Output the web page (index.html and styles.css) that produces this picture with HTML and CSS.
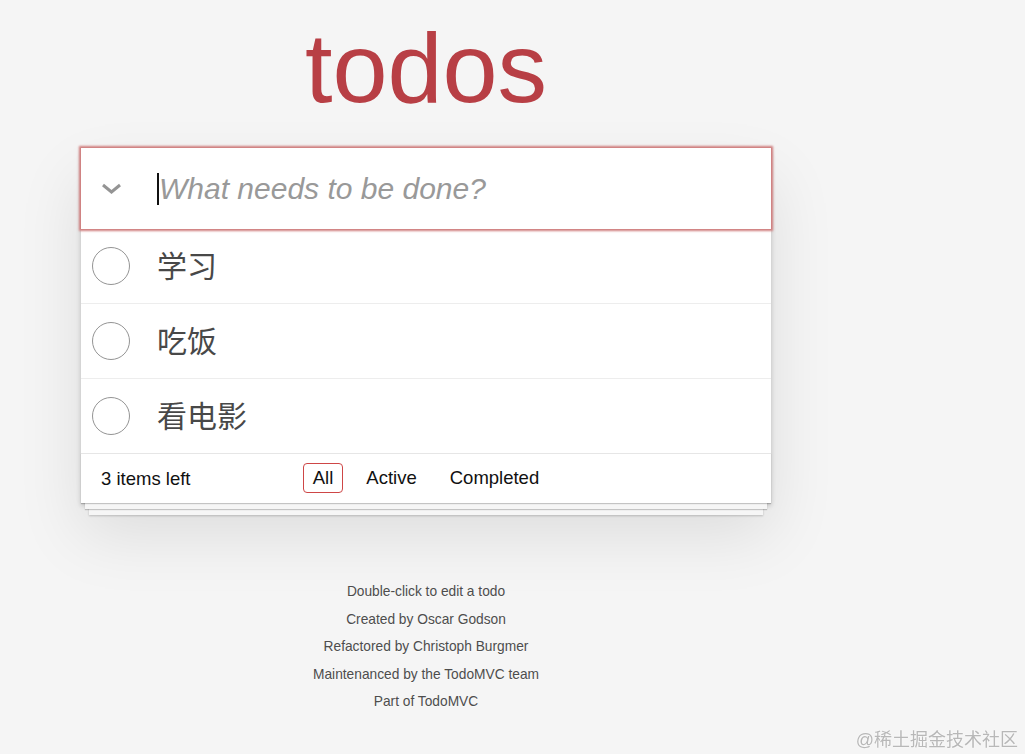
FILE: index.html
```html
<!DOCTYPE html>
<html lang="zh-CN">
<head>
  <meta charset="UTF-8">
  <meta name="viewport" content="width=device-width, initial-scale=1.0">
  <title>todos</title>
  <link rel="stylesheet" href="styles.css">
</head>
<body>
  <div class="page">
    <h1 class="title">todos</h1>

    <!-- APP -->
    <section class="todoapp">
      <header class="new-row">
        <svg class="toggle-all" width="21" height="11" viewBox="0 0 21 11">
          <polyline points="2,2 10.5,9 19,2" fill="none" stroke="#949494" stroke-width="3"/>
        </svg>
        <span class="caret"></span>
        <input class="new-todo" type="text" placeholder="What needs to be done?">
      </header>

      <ul class="todo-list">
        <li class="todo"><span class="toggle"></span><label>学习</label></li>
        <li class="todo"><span class="toggle"></span><label>吃饭</label></li>
        <li class="todo"><span class="toggle"></span><label>看电影</label></li>
      </ul>

      <footer class="footer">
        <span class="todo-count">3 items left</span>
        <ul class="filters">
          <li><a href="#/" class="selected">All</a></li>
          <li><a href="#/active">Active</a></li>
          <li><a href="#/completed">Completed</a></li>
        </ul>
        <span></span>
      </footer>
    </section>

    <!-- INFO -->
    <footer class="info">
      <p>Double-click to edit a todo</p>
      <p>Created by Oscar Godson</p>
      <p>Refactored by Christoph Burgmer</p>
      <p>Maintenanced by the TodoMVC team</p>
      <p>Part of TodoMVC</p>
    </footer>
  </div>

  <div class="watermark">@稀土掘金技术社区</div>
</body>
</html>
```

FILE: styles.css
```css
/* === TRANG === */
body {
  margin: 0;
  background: #f5f5f5;
  font-family: "Liberation Sans", Arial, "Noto Sans CJK SC", sans-serif;
  color: #111;
}

.page {
  width: 690px;
  margin-left: 81px;
}

.title {
  margin: 18px 0 30px;
  font-size: 99px;
  line-height: 100px;
  font-weight: 400;
  color: #b83f45;
  text-align: center;
}

/* === APP === */
.todoapp {
  background: #fff;
  box-shadow: 0 2.5px 5px 0 rgba(0,0,0,0.2), 0 31px 62px 0 rgba(0,0,0,0.1);
}

.new-row {
  position: relative;
  z-index: 1;
  display: flex;
  align-items: center;
  height: 81px;
  padding-left: 20px;
  background: #fff;
  box-shadow: 0 0 2px 2px #cf7d7d;
}

.toggle-all {
  display: block;
}

.caret {
  width: 2px;
  height: 32px;
  margin-left: 35px;
  background: #111;
}

.new-todo {
  flex: 1;
  padding: 0;
  border: 0;
  outline: 0;
  background: transparent;
  font-family: "Liberation Sans", Arial, sans-serif;
  font-size: 30px;
  color: #4d4d4d;
}

.new-todo::placeholder {
  font-style: italic;
  color: #999;
}

/* === DANH SÁCH === */
.todo-list {
  list-style: none;
  margin: 0;
  padding: 0;
}

.todo {
  display: flex;
  align-items: center;
  height: 74px;
  border-bottom: 1px solid #ededed;
}

.todo:last-child {
  border-bottom: none;
}

.toggle {
  width: 36px;
  height: 36px;
  margin-left: 11px;
  border: 1px solid #949494;
  border-radius: 50%;
}

.todo label {
  margin-left: 27px;
  padding-top: 2px;
  font-size: 30px;
  line-height: 36px;
  color: #484848;
}

/* === FOOTER === */
.footer {
  display: grid;
  grid-template-columns: 1fr auto 1fr;
  align-items: center;
  height: 49px;
  padding: 0 20px;
  border-top: 1px solid #e6e6e6;
  font-size: 18.5px;
  color: #111;
  box-shadow: 0 1px 1px rgba(0,0,0,0.2),
              0 10px 0 -4px #f6f6f6,
              0 11px 1px -4px rgba(0,0,0,0.2),
              0 20px 0 -8px #f6f6f6,
              0 21px 2px -8px rgba(0,0,0,0.2);
}

.filters {
  display: flex;
  gap: 13px;
  list-style: none;
  margin: 0 0 2px;
  padding: 0;
}

.filters a {
  display: block;
  padding: 3px 9px;
  border: 1px solid transparent;
  border-radius: 4px;
  color: inherit;
  text-decoration: none;
  line-height: 22px;
}

.filters a.selected {
  border-color: #ce4646;
}

/* === INFO === */
.info {
  margin-top: 82px;
  text-align: center;
  font-size: 13.75px;
  color: #4d4d4d;
  text-shadow: 0 1px 0 rgba(255,255,255,0.5);
}

.info p {
  margin: 13.75px 0;
  line-height: 1;
}

.watermark {
  position: fixed;
  right: 7px;
  bottom: 3px;
  font-size: 18px;
  color: #b8b8b8;
  text-shadow: 0 0 2px #fff;
}
```
